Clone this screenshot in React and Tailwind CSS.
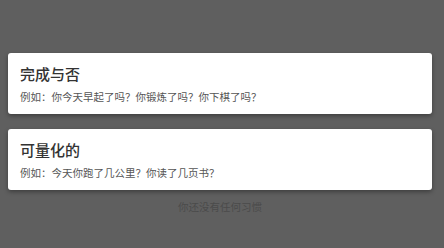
export default function App() {
  const cards = [
    { title: "完成与否", desc: "例如：你今天早起了吗？你锻炼了吗？你下棋了吗？" },
    { title: "可量化的", desc: "例如：今天你跑了几公里？你读了几页书？" },
  ];

  return (
    <div
      className="h-screen w-full bg-[#5f5f5f] pt-[53px] pl-2 pr-3"
      style={{ fontFamily: '"Noto Sans CJK SC", "Noto Sans", sans-serif' }}
    >
      <div className="flex flex-col gap-[15px]">
        {cards.map((c) => (
          <div
            key={c.title}
            className="h-[61px] rounded-[3px] bg-white pl-3 pt-[11px] shadow-[0_2px_4px_rgba(0,0,0,0.35)]"
          >
            <div className="text-[15px] leading-5 font-medium text-[#333333]">
              {c.title}
            </div>
            <div className="mt-[6px] text-[10.5px] leading-[14px] text-[#555555]">
              {c.desc}
            </div>
          </div>
        ))}
      </div>
      <div className="mt-[10px] text-center text-[10.5px] leading-[14px] text-[#4b4b4b]">
        你还没有任何习惯
      </div>
    </div>
  );
}
